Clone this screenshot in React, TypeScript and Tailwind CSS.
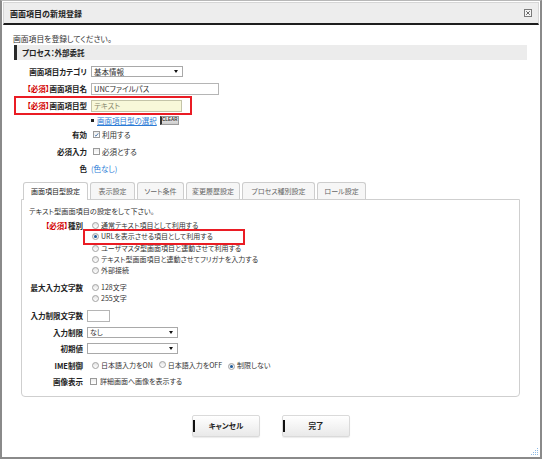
import React from "react";

function Radio({ checked }: { checked?: boolean }) {
  return (
    <span className="inline-flex items-center justify-center w-[7px] h-[7px] rounded-full border border-[#a3a3a3] bg-[linear-gradient(180deg,#e2e2e2,#ffffff)] shrink-0">
      {checked && <span className="w-[3px] h-[3px] rounded-full bg-[#1b5a9c]" />}
    </span>
  );
}

function Check({ checked }: { checked?: boolean }) {
  return (
    <span className="inline-flex items-center justify-center w-[7px] h-[7px] border border-[#9a9a9a] bg-[linear-gradient(180deg,#ececec,#ffffff)] shrink-0">
      {checked && (
        <svg viewBox="0 0 7 7" className="w-[6px] h-[6px]">
          <path d="M1.2 3.6 L2.8 5.2 L5.9 1.2" stroke="#2a5e9c" strokeWidth="1.1" fill="none" />
        </svg>
      )}
    </span>
  );
}

function Arrow() {
  return <span className="w-0 h-0 border-l-[2.5px] border-r-[2.5px] border-t-[3px] border-l-transparent border-r-transparent border-t-[#111]" />;
}

function TopRow({ label, children, cls }: { label: React.ReactNode; children?: React.ReactNode; cls?: string }) {
  return (
    <div className={"h-[17px] flex items-center relative " + (cls || "")}>
      <span className="w-[74px] shrink-0 text-right font-bold text-[#222]">{label}</span>
      <div className="ml-[4px] flex items-center">{children}</div>
    </div>
  );
}

const req = <span className="text-[#d20000]">【必須】</span>;

export default function App() {
  const tabs: [string, string, boolean][] = [
    ["画面項目型設定", "w-[65px]", true],
    ["表示設定", "w-[45px]", false],
    ["ソート条件", "w-[47px]", false],
    ["変更履歴設定", "w-[54px]", false],
    ["プロセス種別設定", "w-[73px]", false],
    ["ロール設定", "w-[49px]", false],
  ];
  const kinds = [
    "通常テキスト項目として利用する",
    "URLを表示させる項目として利用する",
    "ユーザマスタ型画面項目と連動させて利用する",
    "テキスト型画面項目と連動させてフリガナを入力する",
    "外部接続",
  ];
  return (
    <div className="w-[542px] h-[459px] bg-white border-x-2 border-b-2 border-t border-[#8a8a8a] border-t-[#b8b8b8] p-[1px] flex flex-col font-['Noto_Sans_CJK_JP','Noto_Sans',sans-serif] [font-feature-settings:'palt'] text-[7.5px] leading-[11px] text-[#333]">
      <div className="h-[23px] shrink-0 flex items-center justify-between bg-[#ededed] border-x border-t border-[#d6d6d6] border-b-2 border-b-[#1e1e1e] pl-[6px] pr-[6px]">
        <span className="font-bold text-[8px] text-[#222]">画面項目の新規登録</span>
        <svg width="8" height="8" viewBox="0 0 8 8">
          <rect x="0.5" y="0.5" width="7" height="7" fill="#f6f6f6" stroke="#7a7a7a" />
          <path d="M2.2 2.2L5.8 5.8M5.8 2.2L2.2 5.8" stroke="#555" strokeWidth="0.9" />
        </svg>
      </div>

      <div className="relative flex-1 flex flex-col pl-[10px] pr-[12px]">
        <div className="mt-[8px] h-[11px] text-[7.8px]">画面項目を登録してください。</div>
        <div className="mt-[1px] ml-[1px] h-[15px] flex items-center bg-[#ececec] border-l-[3px] border-l-[#2a2a2a] pl-[5px] font-bold text-[#222]">
          プロセス：外部委託
        </div>

        <div className="mt-[3px] flex flex-col">
          <TopRow label="画面項目カテゴリ">
            <div className="w-[92px] h-[11px] border border-[#a9a9a9] bg-white flex items-center justify-between pl-[2px] pr-[4px]">
              <span>基本情報</span>
              <Arrow />
            </div>
          </TopRow>
          <TopRow label={<>{req}画面項目名</>}>
            <div className="w-[128px] h-[12px] border border-[#b5b5b5] bg-white flex items-center pl-[2px]">UNCファイルパス</div>
          </TopRow>
          <TopRow label={<>{req}画面項目型</>}>
            <div className="w-[91px] h-[12px] border border-[#c4c4a8] bg-[#f8f8d9] flex items-center pl-[2px] text-[#8a8a70]">テキスト</div>
            <span className="absolute left-[1px] top-[-1px] w-[178px] h-[19px] border-2 border-[#ea1c24]" />
          </TopRow>
          <div className="h-[12px] flex items-center pl-[78px]">
            <span className="w-[3px] h-[3px] bg-[#222]" />
            <span className="ml-[3px] text-[#2b7bd6] underline">画面項目型の選択</span>
            <span className="ml-[3px] w-[19px] h-[9px] flex items-center justify-center border border-[#9a9a9a] border-l-2 border-l-[#333] bg-[linear-gradient(180deg,#f4f4f4,#cccccc)] text-[4.5px] leading-none font-bold text-[#333] font-['Liberation_Sans',sans-serif]">
              CLEAR
            </span>
          </div>
          <TopRow label="有効">
            <span className="ml-[2px] flex items-center">
              <Check checked />
              <span className="ml-[2px]">利用する</span>
            </span>
          </TopRow>
          <TopRow label="必須入力">
            <span className="ml-[2px] flex items-center">
              <Check />
              <span className="ml-[2px]">必須とする</span>
            </span>
          </TopRow>
          <TopRow label="色">
            <span className="text-[#2b7bd6]">(色なし)</span>
          </TopRow>
        </div>

        <div className="mt-[5px] ml-[10px] h-[17px] flex gap-[2px] items-stretch text-[7px]">
          {tabs.map(([t, w, a]) => (
            <div
              key={t}
              className={
                w +
                " flex items-center justify-center rounded-t-[3px] border-x border-t border-[#cdcdcd] " +
                (a ? "bg-white text-[#222] h-[18px] relative z-10" : "bg-[#f6f6f6] text-[#666]")
              }
            >
              {t}
            </div>
          ))}
        </div>

        <div className="ml-[8px] mr-[7px] border border-[#cfcfcf] rounded-b-[4px] pl-[7px] pt-[6px] pb-[9px] flex flex-col">
          <div className="h-[11px] text-[7.2px]">テキスト型画面項目の設定をして下さい。</div>
          <div className="mt-[3px] flex">
            <span className="w-[54px] shrink-0 text-right font-bold text-[#222] h-[11.25px] leading-[11.25px]">
              {req}種別
            </span>
            <div className="ml-[9px] flex flex-col text-[7px]">
              {kinds.map((k, i) => (
                <div key={k} className="h-[11.25px] flex items-center relative">
                  <Radio checked={i === 1} />
                  <span className="ml-[2px]">{k}</span>
                  {i === 1 && <span className="absolute left-[-9px] top-[-2px] w-[162px] h-[16px] border-2 border-[#ea1c24]" />}
                </div>
              ))}
            </div>
          </div>

          <div className="mt-[6px] flex">
            <span className="w-[54px] shrink-0 text-right font-bold text-[#222] h-[11px]">最大入力文字数</span>
            <div className="ml-[9px] flex flex-col text-[7px]">
              <div className="h-[11px] flex items-center">
                <Radio />
                <span className="ml-[2px]">128文字</span>
              </div>
              <div className="h-[11px] flex items-center">
                <Radio />
                <span className="ml-[2px]">255文字</span>
              </div>
            </div>
          </div>

          <div className="mt-[5px] h-[12.5px] flex items-center">
            <span className="w-[54px] shrink-0 text-right font-bold text-[#222]">入力制限文字数</span>
            <div className="ml-[4px] w-[23px] h-[12px] border border-[#b5b5b5] bg-white" />
          </div>

          <div className="mt-[5px] h-[11px] flex items-center">
            <span className="w-[54px] shrink-0 text-right font-bold text-[#222]">入力制限</span>
            <div className="ml-[4px] w-[91px] h-[11px] border border-[#a9a9a9] bg-white flex items-center justify-between pl-[2px] pr-[4px] text-[7px]">
              <span>なし</span>
              <Arrow />
            </div>
          </div>

          <div className="mt-[5px] h-[11px] flex items-center">
            <span className="w-[54px] shrink-0 text-right font-bold text-[#222]">初期値</span>
            <div className="ml-[4px] w-[91px] h-[11px] border border-[#a9a9a9] bg-white flex items-center justify-end pr-[4px]">
              <Arrow />
            </div>
          </div>

          <div className="mt-[6px] h-[11px] flex items-center">
            <span className="w-[54px] shrink-0 text-right font-bold text-[#222]">IME制御</span>
            <div className="ml-[9px] flex items-center text-[7px]">
              <Radio />
              <span className="ml-[2px]">日本語入力をON</span>
              <span className="ml-[6px]"><Radio /></span>
              <span className="ml-[2px]">日本語入力をOFF</span>
              <span className="ml-[6px]"><Radio checked /></span>
              <span className="ml-[2px]">制限しない</span>
            </div>
          </div>

          <div className="mt-[5px] h-[11px] flex items-center">
            <span className="w-[54px] shrink-0 text-right font-bold text-[#222]">画像表示</span>
            <div className="ml-[7px] flex items-center text-[7px]">
              <Check />
              <span className="ml-[3px]">詳細画面へ画像を表示する</span>
            </div>
          </div>
        </div>

        <div className="mt-[18px] pl-[2px] flex justify-center gap-[22px]">
          {["キャンセル", "完了"].map((b) => (
            <button
              key={b}
              className="relative w-[68px] h-[22px] border border-[#dadada] rounded-[2px] bg-[linear-gradient(180deg,#ffffff,#e9e9e9)] shadow-[0_1px_1px_rgba(0,0,0,0.08)] font-bold text-[#222] text-[7.5px] leading-[11px]"
            >
              <span className="absolute left-0 top-[4px] bottom-[4px] w-[2px] bg-[#111]" />
              {b}
            </button>
          ))}
        </div>

        <svg className="absolute right-[1px] bottom-[1px]" width="7" height="7" viewBox="0 0 7 7">
          {[
            [6, 0], [6, 2], [4, 2], [6, 4], [4, 4], [2, 4], [6, 6], [4, 6], [2, 6], [0, 6],
          ].map(([x, y], i) => (
            <rect key={i} x={x} y={y} width="1" height="1" fill="#8fbbe6" />
          ))}
        </svg>
      </div>
    </div>
  );
}
